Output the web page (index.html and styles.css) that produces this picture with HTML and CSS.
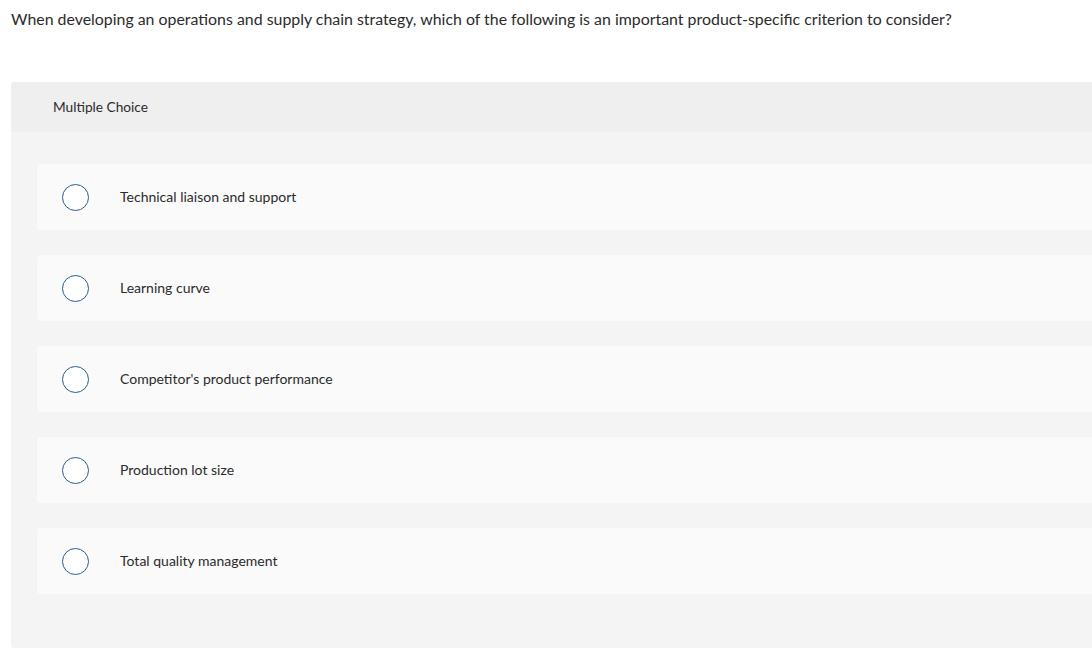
FILE: index.html
```html
<!DOCTYPE html>
<html>
<head>
<meta charset="utf-8">
<link rel="stylesheet" href="styles.css">
</head>
<body>
<div class="page">
  <p class="question">When developing an operations and supply chain strategy, which of the following is an important product-specific criterion to consider?</p>
  <div class="mc">
    <div class="mc-header">Multiple Choice</div>
    <div class="mc-body">
      <div class="option"><span class="radio"></span><span class="label">Technical liaison and support</span></div>
      <div class="option"><span class="radio"></span><span class="label">Learning curve</span></div>
      <div class="option"><span class="radio"></span><span class="label">Competitor's product performance</span></div>
      <div class="option"><span class="radio"></span><span class="label">Production lot size</span></div>
      <div class="option"><span class="radio"></span><span class="label">Total quality management</span></div>
    </div>
  </div>
</div>
</body>
</html>
```

FILE: styles.css
```css
html, body {
  margin: 0;
  padding: 0;
  background: #fff;
  overflow: hidden;
}
body {
  font-family: "Lato", "Liberation Sans", sans-serif;
  color: #333;
}
.page {
  padding: 0 0 0 11px;
  width: 1120px;
}
.question {
  margin: 0;
  padding-top: 9px;
  font-size: 15.9px;
  line-height: 20px;
  color: #2b2b2b;
}
.mc {
  margin-top: 53px;
  border-radius: 3px;
  overflow: hidden;
}
.mc-header {
  background: #efefef;
  height: 50px;
  box-sizing: border-box;
  padding-bottom: 2px;
  display: flex;
  align-items: center;
  padding-left: 42px;
  font-size: 13.7px;
  color: #2b2b2b;
}
.mc-body {
  background: #f4f4f4;
  padding: 32px 0 54px 26px;
  display: flex;
  flex-direction: column;
  gap: 25px;
}
.option {
  background: #fafafa;
  height: 66px;
  border-radius: 3px 0 0 3px;
  display: flex;
  align-items: center;
  padding-left: 25px;
}
.radio {
  width: 25px;
  height: 25px;
  border: 1.5px solid #2a5b8c;
  border-radius: 50%;
  background: #fff;
  flex: none;
}
.label {
  margin-left: 31px;
  padding-bottom: 2px;
  font-size: 14px;
  color: #2b2b2b;
}
```
